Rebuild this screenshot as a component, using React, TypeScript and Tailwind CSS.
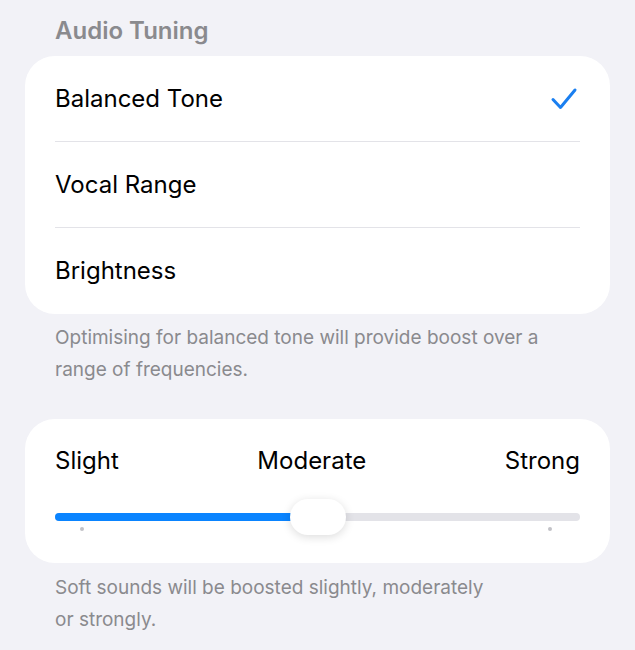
const options = ["Balanced Tone", "Vocal Range", "Brightness"];

function Check() {
  return (
    <svg width="28" height="24" viewBox="0 0 28 24" fill="none">
      <path
        d="M3 12.5 L10.5 20.5 L25 3"
        stroke="#1a7ff0"
        strokeWidth="3"
        strokeLinecap="round"
        strokeLinejoin="round"
      />
    </svg>
  );
}

export default function App() {
  const selected = 0;
  const level = 50;

  return (
    <div
      className="min-h-[650px] bg-[#f2f2f7] px-[25px] pt-[14px]"
      style={{ fontFamily: "Inter, 'Noto Sans', sans-serif" }}
    >
      <div className="mb-[8px] px-[30px] text-[24px] font-semibold leading-[34px] text-[#8a8a8e]">
        Audio Tuning
      </div>

      {/* options */}
      <div className="overflow-hidden rounded-[30px] bg-white">
        {options.map((opt, i) => (
          <div
            key={opt}
            className={
              i < options.length - 1
                ? "mx-[30px] flex h-[86px] items-center justify-between border-b border-[#e3e3e8]"
                : "mx-[30px] flex h-[86px] items-center justify-between"
            }
          >
            <span className="text-[24px] text-black">{opt}</span>
            {i === selected && (
              <span className="mr-[2px]">
                <Check />
              </span>
            )}
          </div>
        ))}
      </div>
      <p className="mt-[8px] px-[30px] text-[19px] leading-[32px] text-[#8a8a8e]">
        Optimising for balanced tone will provide boost over a range of frequencies.
      </p>

      {/* strength slider */}
      <div className="mt-[33px] rounded-[30px] bg-white px-[30px] pb-[29px] pt-[27px]">
        <div className="flex items-center justify-between text-[24px] leading-[30px] text-black">
          <span>Slight</span>
          <span>Moderate</span>
          <span>Strong</span>
        </div>
        <div className="relative mt-[23px] pb-[3px] pt-[14px]">
          <div className="flex h-[8px] overflow-hidden rounded-full bg-[#e3e3e8]">
            <div className="h-full bg-[#0a84ff]" style={{ width: `${level}%` }} />
          </div>
          <div className="mt-[6px] flex justify-between pl-[25px] pr-[28px]">
            <span className="h-[4px] w-[4px] rounded-full bg-[#c2c2c7]" />
            <span className="h-[4px] w-[4px] rounded-full bg-[#c2c2c7]" />
          </div>
          <div
            className="absolute top-0 h-[36px] w-[56px] -translate-x-1/2 rounded-full bg-white shadow-[0_2px_10px_rgba(0,0,0,0.14)]"
            style={{ left: `${level}%` }}
          />
        </div>
      </div>
      <p className="mt-[9px] w-[500px] px-[30px] text-[19px] leading-[32px] text-[#8a8a8e]">
        Soft sounds will be boosted slightly, moderately or strongly.
      </p>
    </div>
  );
}
